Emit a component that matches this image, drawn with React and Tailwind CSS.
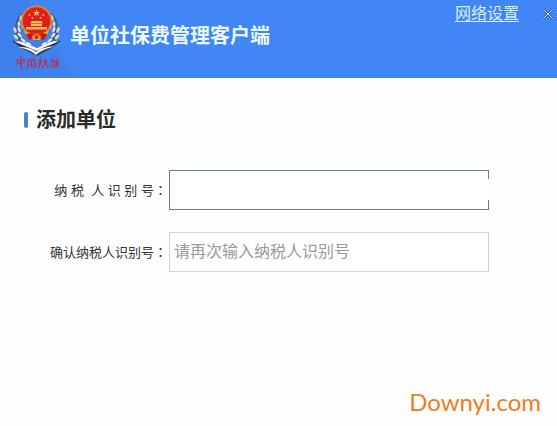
import React from 'react';

const leaves = [
  [3, 26, -20], [4, 33, -40], [8, 39, -55], [14, 43, -68], [7, 20, 5], [9, 14, 20],
];

const Wreath = () => (
  <g>
    <path d="M11 11C4 19 3 32 10 39C14 43 19 45 24 46" fill="none" stroke="#4b5a78" strokeWidth="5" />
    {leaves.map(([x, y, r]) => (
      <g key={y} transform={`rotate(${r} ${x} ${y})`}>
        <ellipse cx={x} cy={y} rx="1.5" ry="3" fill="#c9d6e6" />
        <ellipse cx={x + 4} cy={y + 1} rx="1.3" ry="3" fill="#dfe6ee" />
      </g>
    ))}
  </g>
);

const TaxEmblem = () => (
  <svg viewBox="0 0 50 66" className="h-[66px] w-[50px] shrink-0" role="img" aria-label="中国税务">
    <Wreath />
    <g transform="translate(49 0) scale(-1 1)">
      <Wreath />
    </g>
    <path d="M1 37L25 46L48 37L40 44L25 52L9 44Z" fill="#34415c" />
    <path d="M1 37L11 38L25 44L38 38L48 37L25 47Z" fill="#f4f7fb" />
    <path d="M1 37C10 44 18 43 24 49C31 43 39 43 48 37" fill="none" stroke="#26344f" strokeWidth="1.4" />
    <path d="M6 43C14 43 20 44 24 48C29 44 35 43 43 42C35 45 29 46 24 51C20 47 14 45 6 43Z" fill="#eef3f8" />
    <circle cx="24.5" cy="17" r="15.5" fill="#d98a2b" />
    <circle cx="24.5" cy="17" r="13.8" fill="#e01f16" />
    <path d="M12 26C17 31 32 31 37 26L36 30C31 34 18 34 13 30Z" fill="#e4a232" />
    <path d="M14 30L19 29L24.5 31L30 29L35 30L32 36L27 34L24.5 37L22 34L17 36Z" fill="#c9190f" />
    <path d="M20 32L24.5 30L29 32L28 36H21Z" fill="#e4a232" />
    <circle cx="24.5" cy="33" r="2" fill="#d9261a" />
    <path d="M24.5 5.500L25.400 8H28L26 9.500L26.700 12L24.500 10.500L22.300 12L23 9.500L21 8H23.600Z" fill="#ffd06a" />
    <g fill="#f6bd58">
      <circle cx="17.5" cy="11" r="1.1" />
      <circle cx="20.5" cy="14" r="1" />
      <circle cx="28.5" cy="14" r="1" />
      <circle cx="31.5" cy="11" r="1.1" />
      <path d="M20 17H29L31 19H18Z" />
      <path d="M19 19.500H30V22H19Z" />
      <path d="M14 23H35V25.500H14Z" />
    </g>
    {/* brush script under the badge */}
    <g fill="none" stroke="#c42a45" strokeWidth="1.2" strokeLinecap="round" strokeLinejoin="round">
      <path d="M5 56L5.500 60L12 58L12.500 55L5 56M8.500 52L9.500 65" />
      <path d="M16 56L15.500 64M16 56L23 55L23.500 63L21 63M18 58L21 57M19.500 57V62M17.500 62L21 61" />
      <path d="M29 54L27 57L29 56.500L27 64M26 60L29 59M33 55L32 58L35 57L34 60L32 60L30 64M34 60L35 63L37 62" />
      <path d="M41 54L39 57L42 57L39 63M45 55L43 58L47 57L44 60M43 61L46 60L45 63L42 63L43 61" />
    </g>
  </svg>
);

const CloseIcon = () => (
  <svg viewBox="0 0 10 10" className="h-[10px] w-[10px]" aria-hidden="true">
    <path d="M0.500 0.500L9.500 9.500M9.500 0.500L0.500 9.500" fill="none" stroke="#2d5596" strokeWidth="2" />
    <path d="M0.500 0.500L9.500 9.500M9.500 0.500L0.500 9.500" fill="none" stroke="#d5e8f5" strokeWidth="1" />
  </svg>
);

const Colon = () => <span className="font-['Noto_Sans_CJK_TC',sans-serif]">：</span>;

const Header = () => (
  <header className="flex h-[78px] items-start justify-between bg-[#4285f4] bg-linear-[60deg,#3e80ee_0,#3e80ee_60px,#4285f4_68px] pl-3">
    <div className="flex items-start gap-2 pt-1">
      <TaxEmblem />
      <h1 className="pt-[18px] text-xl leading-7 font-bold text-[#e9fbff]">单位社保费管理客户端</h1>
    </div>
    <div className="flex items-center gap-6 pt-1">
      <a href="#network" className="text-base leading-5 text-[#d5f0ff] underline underline-offset-2">网络设置</a>
      <button type="button" aria-label="关闭" className="flex pr-1">
        <CloseIcon />
      </button>
    </div>
  </header>
);

const App = () => {
  return (
    <div className="min-h-screen bg-[#fefefe] font-['Liberation_Sans','Noto_Sans_CJK_SC',sans-serif]">
      <Header />
      <main className="pt-7">
        <div className="flex items-center gap-2 pl-6">
          <span className="h-4 w-1 rounded-full bg-[#4a80d0]" />
          <h2 className="text-xl leading-7 font-bold text-[#2b2b2b]">添加单位</h2>
        </div>
        <form className="mt-9 flex flex-col gap-[22px] pr-[68px]">
          <div className="flex items-center">
            <label htmlFor="taxId" className="w-[169px] shrink-0 pr-0.5 text-right text-[13px] whitespace-pre text-[#333]">
              纳 税  人 识 别 号<Colon />
            </label>
            <div className="relative flex-1">
              <input id="taxId" type="text" className="block h-10 w-full border border-[#5f7f91] bg-white px-1 text-base outline-none" />
              <span className="absolute top-[9px] right-0 h-[21px] w-1 bg-white" />
            </div>
          </div>
          <div className="flex items-center">
            <label htmlFor="taxIdConfirm" className="w-[169px] shrink-0 pr-0.5 text-right text-[13px] text-[#333]">
              确认纳税人识别号<Colon />
            </label>
            <input
              id="taxIdConfirm"
              type="text"
              placeholder="请再次输入纳税人识别号"
              className="h-10 min-w-0 flex-1 border border-[#d2d2d2] bg-white px-1 text-base outline-none placeholder:text-[#999]"
            />
          </div>
        </form>
      </main>
      <footer className="mt-[114px] pr-4 text-right font-['Lato',sans-serif] text-2xl text-[#ee7d1b]">Downyi.com</footer>
    </div>
  );
};

export default App;
